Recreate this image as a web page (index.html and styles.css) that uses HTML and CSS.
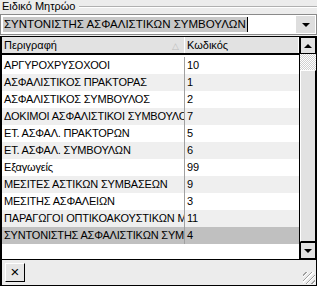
FILE: index.html
```html
<!DOCTYPE html>
<html lang="el">

<head>
    <meta charset="UTF-8">
    <title>Ειδικό Μητρώο</title>
    <link rel="stylesheet" href="styles.css">
</head>

<body>
    <div class="legend">
        <span class="legend-text">Ειδικό Μητρώο</span>
        <span class="legend-line"></span>
    </div>

    <div class="combo">
        <div class="combo-field"><span class="sel">ΣΥΝΤΟΝΙΣΤΗΣ ΑΣΦΑΛΙΣΤΙΚΩΝ ΣΥΜΒΟΥΛΩΝ</span><span class="caret"></span></div>
        <div class="combo-btn"><span class="tri-down"></span></div>
    </div>

    <div class="grid">
        <div class="grid-main">
            <div class="head">
                <div class="cell c1">Περιγραφή <span class="sort">&#9651;</span></div>
                <div class="cell c2">Κωδικός</div>
            </div>
            <div class="rows">
                <div class="row"><div class="cell c1">ΑΡΓΥΡΟΧΡΥΣΟΧΟΟΙ</div><div class="cell c2">10</div></div>
                <div class="row alt"><div class="cell c1">ΑΣΦΑΛΙΣΤΙΚΟΣ ΠΡΑΚΤΟΡΑΣ</div><div class="cell c2">1</div></div>
                <div class="row"><div class="cell c1">ΑΣΦΑΛΙΣΤΙΚΟΣ ΣΥΜΒΟΥΛΟΣ</div><div class="cell c2">2</div></div>
                <div class="row alt"><div class="cell c1">ΔΟΚΙΜΟΙ ΑΣΦΑΛΙΣΤΙΚΟΙ ΣΥΜΒΟΥΛΟΣ</div><div class="cell c2">7</div></div>
                <div class="row"><div class="cell c1">ΕΤ. ΑΣΦΑΛ. ΠΡΑΚΤΟΡΩΝ</div><div class="cell c2">5</div></div>
                <div class="row alt"><div class="cell c1">ΕΤ. ΑΣΦΑΛ. ΣΥΜΒΟΥΛΩΝ</div><div class="cell c2">6</div></div>
                <div class="row"><div class="cell c1">Εξαγωγείς</div><div class="cell c2">99</div></div>
                <div class="row alt"><div class="cell c1">ΜΕΣΙΤΕΣ ΑΣΤΙΚΩΝ ΣΥΜΒΑΣΕΩΝ</div><div class="cell c2">9</div></div>
                <div class="row"><div class="cell c1">ΜΕΣΙΤΗΣ ΑΣΦΑΛΕΙΩΝ</div><div class="cell c2">3</div></div>
                <div class="row alt"><div class="cell c1">ΠΑΡΑΓΩΓΟΙ ΟΠΤΙΚΟΑΚΟΥΣΤΙΚΩΝ ΜΕΣΩΝ</div><div class="cell c2">11</div></div>
                <div class="row selected"><div class="cell c1">ΣΥΝΤΟΝΙΣΤΗΣ ΑΣΦΑΛΙΣΤΙΚΩΝ ΣΥΜΒΟΥΛΩΝ</div><div class="cell c2">4</div></div>
            </div>
        </div>
        <div class="scroll">
            <div class="sb-btn"><span class="tri-up"></span></div>
            <div class="sb-track top"></div>
            <div class="sb-thumb"></div>
            <div class="sb-btn"><span class="tri-down"></span></div>
        </div>
    </div>

    <div class="footer">
        <div class="x-btn">&#215;</div>
        <div class="grip"></div>
    </div>
</body>

</html>
```

FILE: styles.css
```css
* {
    box-sizing: border-box;
}

body {
    margin: 0;
    width: 317px;
    height: 286px;
    display: flex;
    flex-direction: column;
    background-color: #ececec;
    font-family: "Liberation Sans", Arial, sans-serif;
    font-size: 11px;
    color: #000;
    overflow: hidden;
}

.legend {
    height: 13px;
    display: flex;
    align-items: center;
    padding-left: 2px;
}

.legend-text {
    line-height: 13px;
    padding-right: 4px;
}

.legend-line {
    flex: 1;
    height: 1px;
    background-color: #b0b0b0;
    border-bottom: 1px solid #fff;
    box-sizing: content-box;
}

.combo {
    height: 21px;
    margin: 1px 0 1px 0;
    display: flex;
    border: 1px solid #8a8a8a;
    background-color: #fff;
}

.combo-field {
    flex: 1;
    display: flex;
    align-items: center;
    padding-left: 2px;
}

.sel {
    background-color: #c8c8c8;
    font-size: 11.5px;
    line-height: 15px;
    padding: 0 1px;
}

.caret {
    width: 1px;
    height: 15px;
    background-color: #000;
}

.combo-btn {
    width: 19px;
    margin: 1px;
    background-color: #dedede;
    display: flex;
    align-items: center;
    justify-content: center;
}

.tri-down,
.tri-up {
    width: 0;
    height: 0;
    border-left: 4px solid transparent;
    border-right: 4px solid transparent;
}

.tri-down {
    border-top: 4px solid #000;
}

.tri-up {
    border-bottom: 4px solid #000;
}

.grid {
    height: 224px;
    display: flex;
    border: 1px solid #000;
    border-left-width: 2px;
    background-color: #fff;
}

.grid-main {
    flex: 1;
    display: flex;
    flex-direction: column;
    overflow: hidden;
}

.head {
    height: 18px;
    display: flex;
    background-color: #e2e2e2;
    border-bottom: 2px solid #000;
}

.head .cell {
    border-right: 1px solid #fff;
}

.head .c1 {
    position: relative;
}

.sort {
    position: absolute;
    right: 5px;
    top: 1px;
    color: #bcbcbc;
    font-size: 9px;
}

.rows {
    padding-top: 2px;
    letter-spacing: -0.2px;
}

.row {
    height: 17px;
    display: flex;
}

.row.alt {
    background-color: #efefef;
}

.row.selected {
    background-color: #c0c0c0;
}

.cell {
    line-height: 16px;
    padding-left: 2px;
    white-space: nowrap;
    overflow: hidden;
}

.c1 {
    width: 183px;
    border-right: 1px solid #a0a0a0;
}

.c2 {
    flex: 1;
}

.scroll {
    width: 17px;
    display: flex;
    flex-direction: column;
    border-left: 1px solid #000;
}

.sb-btn {
    height: 17px;
    background-color: #e2e2e2;
    display: flex;
    align-items: center;
    justify-content: center;
    border: 1px solid #000;
}

.sb-track {
    height: 16px;
    background-color: #fff;
    background-image: repeating-conic-gradient(#d0d0d0 0 25%, #fff 0 50%);
    background-size: 2px 2px;
}

.sb-thumb {
    flex: 1;
    background-color: #e2e2e2;
    border: 1px solid #000;
    border-top-color: #fff;
    border-left-color: #fff;
}

.footer {
    flex: 1;
    display: flex;
    align-items: center;
    padding-left: 3px;
    position: relative;
    border-bottom: 1px solid #000;
    border-left: 2px solid #000;
    border-right: 1px solid #000;
}

.x-btn {
    width: 20px;
    height: 19px;
    border: 1px solid #000;
    border-top-color: #fff;
    border-left-color: #fff;
    background-color: #e6e6e6;
    font-size: 15px;
    line-height: 16px;
    text-align: center;
}

.grip {
    position: absolute;
    right: 1px;
    bottom: 1px;
    width: 12px;
    height: 12px;
    background-image: repeating-linear-gradient(135deg, transparent 0 2px, #a0a0a0 2px 3px, #fff 3px 4px);
}
```
